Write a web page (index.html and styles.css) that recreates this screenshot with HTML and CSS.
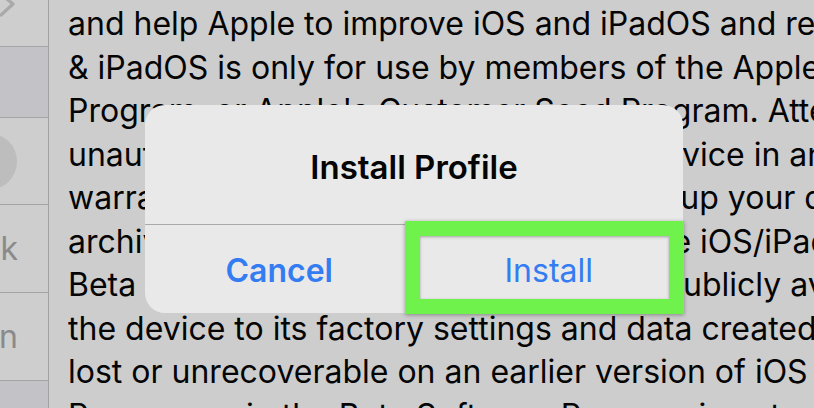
FILE: index.html
```html
<!DOCTYPE html>
<html lang="en">
<head>
<meta charset="utf-8">
<title>Install Profile</title>
<link rel="stylesheet" href="styles.css">
</head>
<body>
<div class="screen">
  <aside class="sidebar">
    <div class="row row-top">
      <svg class="chevron" width="20" height="20" viewBox="0 0 20 20"><polyline points="1,-6 13,4 1,15" fill="none" stroke="#a9a9a9" stroke-width="3.2" stroke-linecap="round" stroke-linejoin="round"/></svg>
    </div>
    <div class="row row-selected"></div>
    <div class="row row-avatar"><span class="avatar"></span></div>
    <div class="row row-text"><span class="side-label">Back</span></div>
    <div class="row row-text"><span class="side-label">Sign In</span></div>
    <div class="row row-selected row-last"></div>
  </aside>
  <main class="content">
    <div class="line">and help Apple to improve iOS and iPadOS and related products. The iOS</div>
    <div class="line">&amp; iPadOS is only for use by members of the Apple Beta Software</div>
    <div class="line">Program, or Apple's Customer Seed Program. Attempting to install</div>
    <div class="line">unauthorized software could put your device in an inoperable state</div>
    <div class="line">warranty, and always be certain to back up your device before</div>
    <div class="line">archive all your data prior to installing the iOS/iPadOS beta software</div>
    <div class="line">Beta Software is not yet intended to be publicly available</div>
    <div class="line">the device to its factory settings and data created on the beta</div>
    <div class="line">lost or unrecoverable on an earlier version of iOS or iPadOS.</div>
    <div class="line">Program or in the Beta Software Program is not permitted.</div>
  </main>

  <div class="alert" role="dialog" aria-label="Install Profile">
    <div class="alert-title">Install Profile</div>
    <div class="alert-actions">
      <div class="alert-btn alert-btn-cancel">Cancel</div>
      <div class="alert-btn alert-btn-install">Install</div>
    </div>
  </div>
  <div class="highlight"></div>
</div>
</body>
</html>
```
FILE: styles.css
```css
html, body {
  margin: 0;
  padding: 0;
}
body {
  width: 814px;
  height: 408px;
  overflow: hidden;
  background: #cdcdcd;
  font-family: Inter, "Noto Sans", "Liberation Sans", sans-serif;
}
.screen {
  position: relative;
  display: flex;
  width: 814px;
  height: 408px;
  overflow: hidden;
}
.sidebar {
  width: 48px;
  flex: none;
  border-right: 1px solid #a2a2a2;
  background: #cecece;
  display: flex;
  flex-direction: column;
  overflow: hidden;
}
.row {
  flex: none;
  position: relative;
  border-bottom: 1px solid #a4a4a4;
  display: flex;
  align-items: center;
  justify-content: flex-end;
  overflow: hidden;
}
.row-top { height: 46px; align-items: flex-start; justify-content: flex-start; }
.row-selected { height: 70px; background: #c3c3c7; }
.row-avatar { height: 86px; justify-content: flex-start; }
.row-text { height: 87px; }
.row-last { height: 40px; border-bottom: none; }
.chevron { display: block; }
.avatar {
  width: 57px;
  height: 57px;
  border-radius: 50%;
  background: #bdbdbd;
  margin-left: -40px;
  flex: none;
}
.side-label {
  font-size: 32px;
  color: #8a8a8a;
  white-space: nowrap;
  padding-right: 30px;
}
.content {
  flex: 1;
  min-width: 0;
  padding: 2px 0 0 19px;
  overflow: hidden;
  color: #050505;
}
.line {
  font-size: 32px;
  line-height: 43.5px;
  white-space: nowrap;
}
.alert {
  position: absolute;
  left: 145px;
  top: 105px;
  width: 538px;
  height: 208px;
  background: #e9e9e9;
  border-radius: 20px;
  display: flex;
  flex-direction: column;
  overflow: hidden;
}
.alert-title {
  height: 120px;
  border-bottom: 1px solid #a9a9a9;
  display: flex;
  align-items: center;
  justify-content: center;
  padding-top: 4px;
  box-sizing: border-box;
  font-size: 33px;
  font-weight: 600;
  color: #050505;
}
.alert-actions {
  flex: 1;
  display: flex;
}
.alert-btn {
  flex: 1;
  display: flex;
  align-items: center;
  justify-content: center;
  font-size: 32px;
  color: #347cf1;
  padding-top: 2px;
}
.alert-btn-cancel {
  font-weight: 600;
  border-right: 1px solid #a9a9a9;
}
.highlight {
  position: absolute;
  left: 405px;
  top: 221px;
  width: 279px;
  height: 93px;
  box-sizing: border-box;
  border: 15px solid #70f24c;
  box-shadow: 0 1px 4px rgba(0, 0, 0, 0.35), inset 0 1px 3px rgba(0, 0, 0, 0.3);
}
```
